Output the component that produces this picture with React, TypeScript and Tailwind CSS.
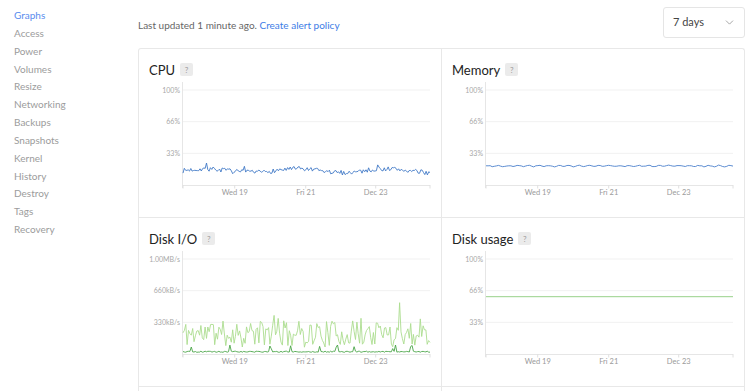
import { ChevronDown } from "lucide-react";

const rng = (seed: number) => () => {
  seed |= 0;
  seed = (seed + 0x6d2b79f5) | 0;
  let t = Math.imul(seed ^ (seed >>> 15), 1 | seed);
  t = (t + Math.imul(t ^ (t >>> 7), 61 | t)) ^ t;
  return ((t ^ (t >>> 14)) >>> 0) / 4294967296;
};

const X0 = 44;
const X1 = 291;
const Y100 = 11;
const Y0 = 106;
const yOf = (v: number) => Y0 - (v * (Y0 - Y100)) / 100;

const toPath = (vals: number[]) =>
  vals
    .map((v, i) => {
      const x = X0 + (i * (X1 - X0)) / (vals.length - 1);
      return `${i ? "L" : "M"}${x.toFixed(1)} ${yOf(v).toFixed(1)}`;
    })
    .join(" ");

const make = (n: number, seed: number, fn: (i: number, r: () => number) => number) => {
  const r = rng(seed);
  return Array.from({ length: n }, (_, i) => fn(i, r));
};

const cpu = make(190, 7, (i, r) => {
  let v = 15 + 2 * Math.sin(i / 11) + (r() - 0.5) * 5;
  if (r() < 0.04) v += 4 + r() * 3;
  return v;
});
const mem = make(120, 3, (i, r) => 20 + 0.6 * Math.sin(i * 1.3) + (r() - 0.5) * 0.8);
const diskRead = make(180, 11, (_, r) => {
  let v = 7 + Math.pow(r(), 0.9) * 28;
  if (r() < 0.03) v += 12;
  return v;
});
diskRead[157] = 54;
const diskWrite = make(180, 5, (_, r) => {
  let v = 1.8 + r() * 1.2;
  if (r() < 0.05) v += 2 + r() * 6;
  return v;
});
const usage = [60.3, 60.3];

type Series = { vals: number[]; color: string };

const ticks = [X0, 95.7, 166.7, 236.7, X1];
const tickLabels = [
  { x: 95.7, t: "Wed 19" },
  { x: 166.7, t: "Fri 21" },
  { x: 236.7, t: "Dec 23" },
];

function Chart({ labels, series }: { labels: string[]; series: Series[] }) {
  const grid = [Y100, Y100 + (Y0 - Y100) / 3, Y100 + (2 * (Y0 - Y100)) / 3];
  return (
    <svg width="302" height="120" className="block">
      {grid.map((y, i) => (
        <g key={i}>
          <line x1={X0} x2={X1} y1={y} y2={y} stroke="#f1f1f1" />
          <text x={41} y={y + 2.5} textAnchor="end" fontSize="7" fill="#a8a8a8">
            {labels[i]}
          </text>
        </g>
      ))}
      <line x1={X0 - 0.5} x2={X0 - 0.5} y1={3} y2={Y0 + 3} stroke="#e6e6e6" />
      <line x1={X0} x2={X1} y1={Y0 + 0.5} y2={Y0 + 0.5} stroke="#e6e6e6" />
      {ticks.map((x) => (
        <line key={x} x1={x} x2={x} y1={Y0} y2={Y0 + 3.5} stroke="#e0e0e0" />
      ))}
      {tickLabels.map((l) => (
        <text key={l.t} x={l.x} y={116} textAnchor="middle" fontSize="7.5" fill="#9a9a9a">
          {l.t}
        </text>
      ))}
      {series.map((s, i) => (
        <path key={i} d={toPath(s.vals)} fill="none" stroke={s.color} strokeWidth="0.9" strokeLinejoin="round" />
      ))}
    </svg>
  );
}

function Cell({ title, right, children }: { title?: string; right?: boolean; children?: React.ReactNode }) {
  return (
    <div className={`h-[169px] border-b border-[#e8e8e8] ${right ? "" : "border-r"}`}>
      {title && (
        <div className="flex items-center gap-[5px] pl-[10px] pt-[11px] h-[30px]">
          <span className="text-[13px] leading-[18px] text-[#222]">{title}</span>
          <span className="w-[13px] h-[13px] rounded-[2px] bg-[#ebebeb] text-[8px] leading-none text-[#9c9c9c] flex items-center justify-center">
            ?
          </span>
        </div>
      )}
      {children}
    </div>
  );
}

const pct = ["100%", "66%", "33%"];

export default function App() {
  const nav = ["Graphs", "Access", "Power", "Volumes", "Resize", "Networking", "Backups", "Snapshots", "Kernel", "History", "Destroy", "Tags", "Recovery"];
  return (
    <div className="flex bg-white min-h-[391px] font-['Lato',sans-serif]">
      <div className="w-[138px] shrink-0 pl-[14px] pt-[7px]">
        {nav.map((n, i) => (
          <div key={n} className={`text-[10px] leading-[17.85px] ${i === 0 ? "text-[#5a8cee]" : "text-[#9c9c9c]"}`}>
            {n}
          </div>
        ))}
      </div>
      <div className="w-[607px]">
        <div className="flex items-center justify-between pt-[7px] h-[48px] pb-[10px]">
          <p className="text-[10px] text-[#666] pt-[5px]">
            Last updated 1 minute ago. <span className="text-[#3d7de6]">Create alert policy</span>
          </p>
          <div className="w-[82px] h-[31px] border border-[#e5e5e5] rounded-[3px] flex items-center justify-between pl-[9px] pr-[8px]">
            <span className="text-[11px] text-[#444]">7 days</span>
            <ChevronDown size={13} strokeWidth={1.2} color="#777" />
          </div>
        </div>
        <div className="border-t border-l border-r border-[#e8e8e8] rounded-t-[3px] grid grid-cols-[303px_302px]">
          <Cell title="CPU">
            <Chart labels={pct} series={[{ vals: cpu, color: "#3f78c6" }]} />
          </Cell>
          <Cell title="Memory" right>
            <Chart labels={pct} series={[{ vals: mem, color: "#4a7fcc" }]} />
          </Cell>
          <Cell title="Disk I/O">
            <Chart
              labels={["1.00MB/s", "660kB/s", "330kB/s"]}
              series={[
                { vals: diskRead, color: "#abdd8f" },
                { vals: diskWrite, color: "#4aa547" },
              ]}
            />
          </Cell>
          <Cell title="Disk usage" right>
            <Chart labels={pct} series={[{ vals: usage, color: "#8ccc7c" }]} />
          </Cell>
          <Cell />
          <Cell right />
        </div>
      </div>
    </div>
  );
}
